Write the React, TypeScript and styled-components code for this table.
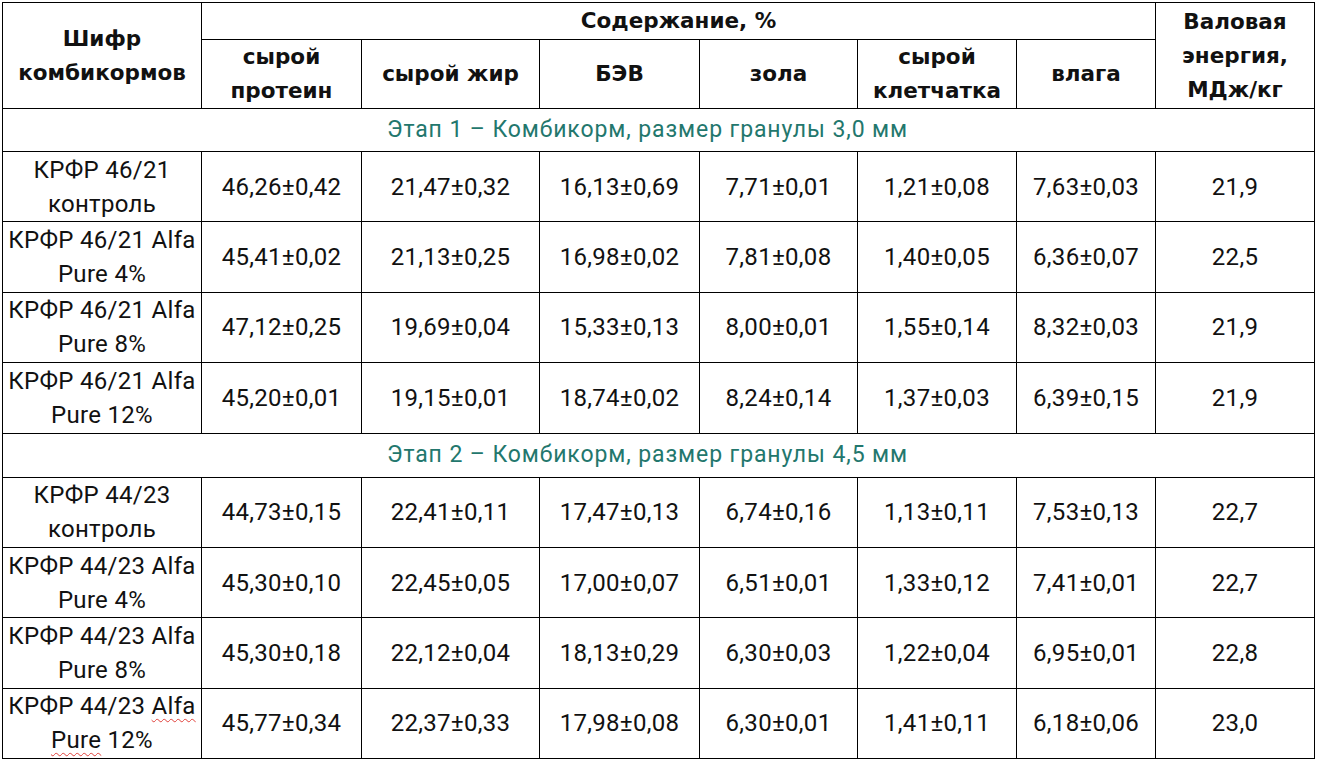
import * as React from 'react';
import styled, {createGlobalStyle} from 'styled-components';

const Global = createGlobalStyle`
    body {
        margin: 2px;
        background: #fff;
        color: #111;
        font-family: Roboto, "Liberation Sans", sans-serif;
    }
`;

const Table = styled.table`
    border-collapse: collapse;
    table-layout: fixed;
    width: 1312px;
`;

const HeadCell = styled.th<{h?: number}>`
    border: 1px solid #000;
    font-family: "DejaVu Sans", sans-serif;
    font-weight: bold;
    font-size: 21.5px;
    line-height: 34px;
    color: #111;
    text-align: center;
    vertical-align: middle;
    padding: 0 4px;
    height: ${p => p.h ?? 0}px;
`;

const StageCell = styled.td<{h: number}>`
    border: 1px solid #000;
    height: ${p => p.h}px;
    padding: 0 22px 0 0;
    font-size: 23px;
    line-height: 26px;
    letter-spacing: 0.9px;
    color: #23776d;
    text-align: center;
    vertical-align: middle;
`;

const Cell = styled.td`
    border: 1px solid #000;
    height: 69.4px;
    padding: 0 2px;
    font-size: 24px;
    letter-spacing: 0.3px;
    line-height: 34px;
    text-align: center;
    vertical-align: middle;
    white-space: nowrap;
`;

const Typo = styled.span`
    text-decoration: underline wavy #e0403a;
    text-decoration-thickness: 1px;
    text-underline-offset: 4px;
`;

const widths = [199, 160, 178, 160, 158, 159, 139, 159];

type Row = {code: string; tail: string; vals: string[]; typo?: boolean};

const stages: {title: string; h: number; rows: Row[]}[] = [
    {
        title: 'Этап 1 – Комбикорм, размер гранулы 3,0 мм',
        h: 42,
        rows: [
            {code: 'КРФР 46/21', tail: 'контроль', vals: ['46,26±0,42', '21,47±0,32', '16,13±0,69', '7,71±0,01', '1,21±0,08', '7,63±0,03', '21,9']},
            {code: 'КРФР 46/21 Alfa', tail: 'Pure 4%', vals: ['45,41±0,02', '21,13±0,25', '16,98±0,02', '7,81±0,08', '1,40±0,05', '6,36±0,07', '22,5']},
            {code: 'КРФР 46/21 Alfa', tail: 'Pure 8%', vals: ['47,12±0,25', '19,69±0,04', '15,33±0,13', '8,00±0,01', '1,55±0,14', '8,32±0,03', '21,9']},
            {code: 'КРФР 46/21 Alfa', tail: 'Pure 12%', vals: ['45,20±0,01', '19,15±0,01', '18,74±0,02', '8,24±0,14', '1,37±0,03', '6,39±0,15', '21,9']},
        ],
    },
    {
        title: 'Этап 2 – Комбикорм, размер гранулы 4,5 мм',
        h: 43,
        rows: [
            {code: 'КРФР 44/23', tail: 'контроль', vals: ['44,73±0,15', '22,41±0,11', '17,47±0,13', '6,74±0,16', '1,13±0,11', '7,53±0,13', '22,7']},
            {code: 'КРФР 44/23 Alfa', tail: 'Pure 4%', vals: ['45,30±0,10', '22,45±0,05', '17,00±0,07', '6,51±0,01', '1,33±0,12', '7,41±0,01', '22,7']},
            {code: 'КРФР 44/23 Alfa', tail: 'Pure 8%', vals: ['45,30±0,18', '22,12±0,04', '18,13±0,29', '6,30±0,03', '1,22±0,04', '6,95±0,01', '22,8']},
            {code: 'КРФР 44/23 Alfa', tail: 'Pure 12%', vals: ['45,77±0,34', '22,37±0,33', '17,98±0,08', '6,30±0,01', '1,41±0,11', '6,18±0,06', '23,0'], typo: true},
        ],
    },
];

const NameCell: React.FC<{row: Row}> = ({row}) => {
    if (row.typo) {
        const [tailWord, ...rest] = row.tail.split(' ');
        return (
            <Cell>
                {row.code.replace(/ Alfa$/, ' ')}<Typo>Alfa</Typo><br />
                <Typo>{tailWord}</Typo> {rest.join(' ')}
            </Cell>
        );
    }
    return (
        <Cell>
            {row.code}<br />{row.tail}
        </Cell>
    );
};

const App: React.FC = () => (
    <>
        <Global />
        <Table>
            <colgroup>
                {widths.map((w, i) => <col key={i} style={{width: w}} />)}
            </colgroup>
            <thead>
                <tr>
                    <HeadCell rowSpan={2}>Шифр<br />комбикормов</HeadCell>
                    <HeadCell colSpan={6} h={36}>Содержание, %</HeadCell>
                    <HeadCell rowSpan={2}>Валовая<br />энергия,<br />МДж/кг</HeadCell>
                </tr>
                <tr>
                    <HeadCell h={68}>сырой<br />протеин</HeadCell>
                    <HeadCell h={68}>сырой жир</HeadCell>
                    <HeadCell h={68}>БЭВ</HeadCell>
                    <HeadCell h={68}>зола</HeadCell>
                    <HeadCell h={68}>сырой<br />клетчатка</HeadCell>
                    <HeadCell h={68}>влага</HeadCell>
                </tr>
            </thead>
            <tbody>
                {stages.map(stage => (
                    <React.Fragment key={stage.title}>
                        <tr>
                            <StageCell colSpan={8} h={stage.h}>{stage.title}</StageCell>
                        </tr>
                        {stage.rows.map((row, i) => (
                            <tr key={i}>
                                <NameCell row={row} />
                                {row.vals.map((v, j) => <Cell key={j}>{v}</Cell>)}
                            </tr>
                        ))}
                    </React.Fragment>
                ))}
            </tbody>
        </Table>
    </>
);

export default App;
